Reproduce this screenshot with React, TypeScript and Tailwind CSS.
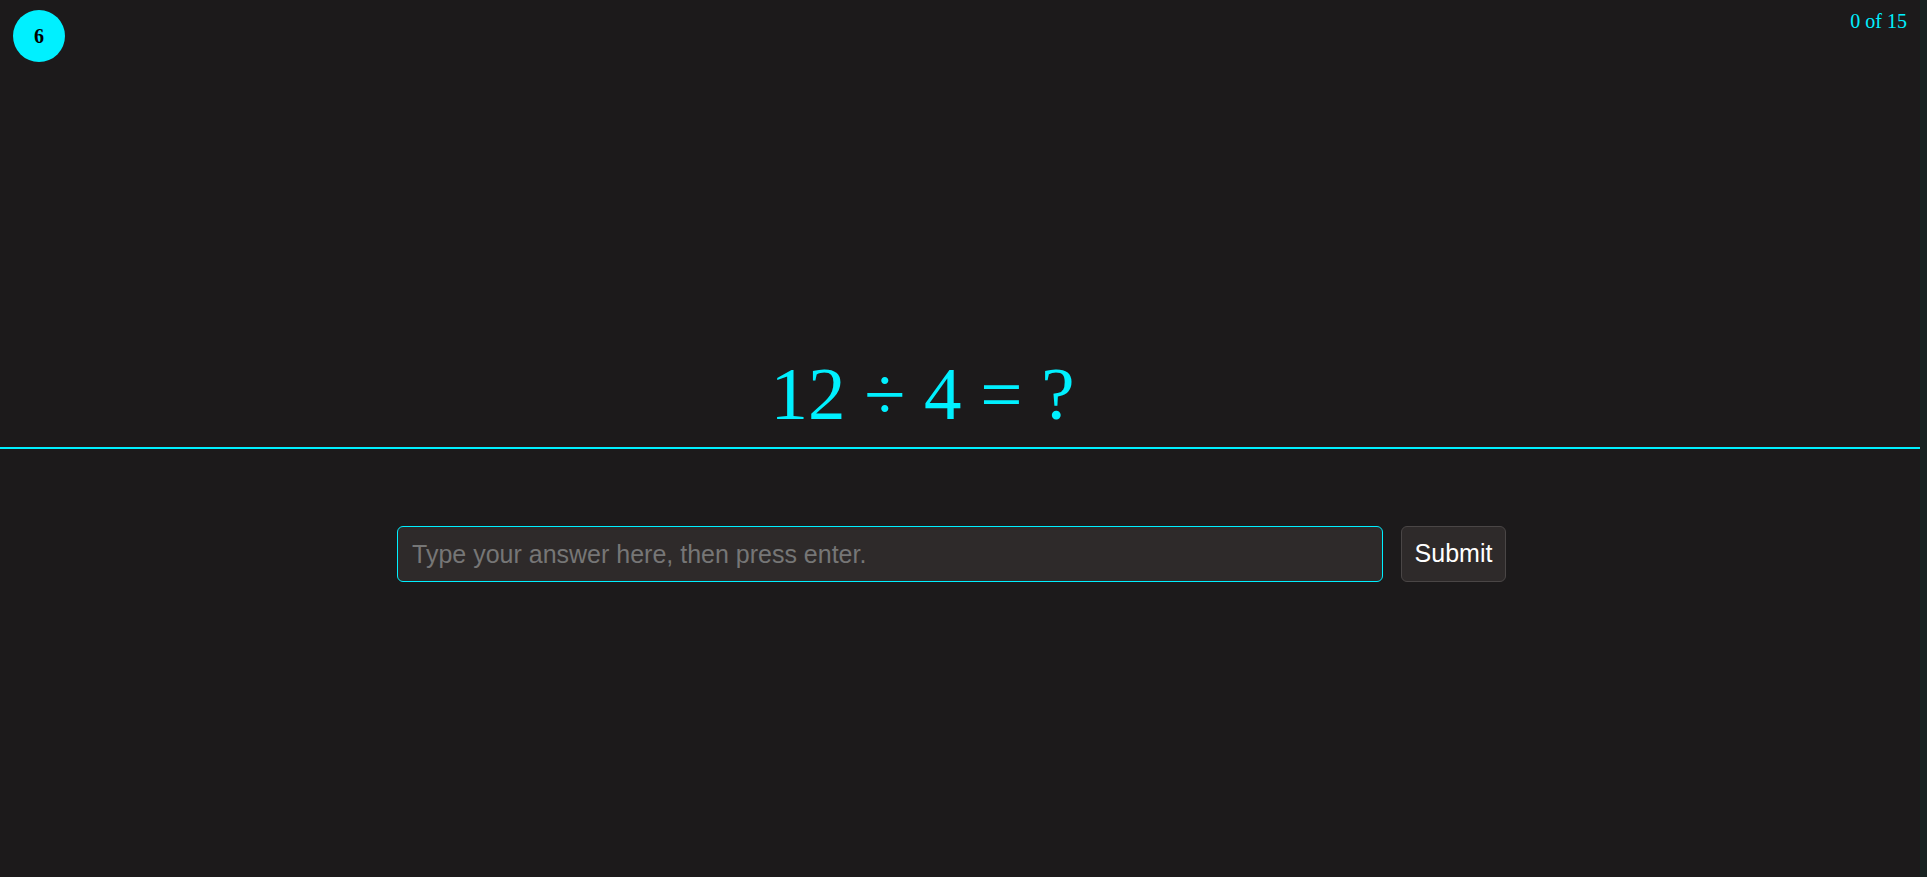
import { useState } from 'react';

export default function App() {
  const [answer, setAnswer] = useState('');

  return (
    <div className="flex min-h-screen w-full bg-[#1c1a1b]" style={{ minHeight: 877 }}>
      <main className="flex flex-1 flex-col">
        {/* Question area */}
        <section className="flex h-[449px] flex-col border-b-2 border-[#00f0ff]">
          <div className="flex items-start justify-between">
            <div className="ml-[13px] mt-[10px] flex h-[52px] w-[52px] items-center justify-center rounded-full bg-[#00f0ff] font-['Liberation_Serif',serif] text-[20px] font-bold text-black">
              6
            </div>
            <div className="mr-[13px] mt-[6px] font-['Liberation_Serif',serif] text-[20px] text-[#00f0ff]">
              0 of 15
            </div>
          </div>
          <div className="flex flex-1 items-end justify-center pb-[16px] pr-[75px]">
            <h1 className="font-['Liberation_Serif',serif] text-[75px] leading-none text-[#00f0ff]">
              12 ÷ 4 = ?
            </h1>
          </div>
        </section>

        {/* Answer form */}
        <form
          className="mt-[77px] flex justify-center gap-[18px] pr-[17px]"
          onSubmit={(e) => e.preventDefault()}
        >
          <input
            autoFocus
            value={answer}
            onChange={(e) => setAnswer(e.target.value)}
            placeholder="Type your answer here, then press enter."
            className="h-[56px] w-[986px] rounded-[6px] border border-[#00f0ff] bg-[#2e2a2a] px-[14px] font-['Liberation_Sans',sans-serif] text-[25px] text-white caret-white outline-none placeholder:text-[#767676]"
          />
          <button
            type="submit"
            className="h-[56px] w-[105px] rounded-[6px] border border-[#4a4646] bg-[#2e2a2a] font-['Liberation_Sans',sans-serif] text-[25px] text-white"
          >
            Submit
          </button>
        </form>
      </main>
      <div className="w-[7px] bg-[#182322]" />
    </div>
  );
}
